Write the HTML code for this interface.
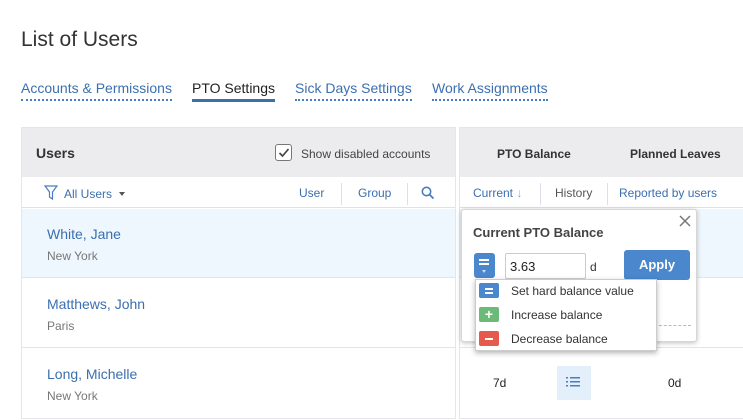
<!DOCTYPE html>
<html><head><meta charset="utf-8"><style>
*{box-sizing:border-box;margin:0;padding:0}
body{width:743px;height:420px;background:#fff;font-family:"Liberation Sans",Arial,sans-serif;position:relative;overflow:hidden;color:#333}
.a{position:absolute;white-space:nowrap}
.tab{font-size:14px;color:#3b6fb0;top:80px;padding-bottom:3px;border-bottom:2px dotted #4a7cc0}
.lnk{color:#3b6fb0}
</style></head><body>
<div class="a" style="left:21px;top:28px;font-size:21px;color:#333">List of Users</div>
<div class="a tab" style="left:21px">Accounts &amp; Permissions</div>
<div class="a tab" style="left:192px;color:#222;border-bottom:3px solid #3b6fb0">PTO Settings</div>
<div class="a tab" style="left:295px">Sick Days Settings</div>
<div class="a tab" style="left:432px">Work Assignments</div>

<!-- left pane -->
<div class="a" style="left:21px;top:127px;width:435px;height:292px;border:1px solid #e3e6ea"></div>
<div class="a" style="left:22px;top:128px;width:433px;height:49px;background:#ececee"></div>
<div class="a" style="left:36px;top:145px;font-size:14px;font-weight:bold;color:#333">Users</div>
<div class="a" style="left:275px;top:144px;width:17px;height:17px;border:1px solid #777;border-radius:3px;background:#fff"></div>
<svg class="a" style="left:278px;top:147px" width="12" height="11"><path d="M1.5 6 L4.5 9 L10.5 2" stroke="#444" stroke-width="1.7" fill="none"/></svg>
<div class="a" style="left:301px;top:147px;font-size:12px;color:#444">Show disabled accounts</div>
<div class="a" style="left:22px;top:177px;width:433px;height:31px;background:#fff;border-bottom:1px solid #dde2e8"></div>
<svg class="a" style="left:44px;top:185px" width="14" height="16"><path d="M1 1 H13 L8.5 7 V14 L5.5 12 V7 Z" stroke="#4a7cc0" stroke-width="1.2" fill="none"/></svg>
<div class="a lnk" style="left:64px;top:187px;font-size:12px">All Users</div>
<div class="a" style="left:119px;top:192px;border:3.5px solid transparent;border-top:4px solid #555"></div>
<div class="a lnk" style="left:299px;top:186px;font-size:12px">User</div>
<div class="a" style="left:341px;top:183px;width:1px;height:22px;background:#dde"></div>
<div class="a lnk" style="left:358px;top:186px;font-size:12px">Group</div>
<div class="a" style="left:407px;top:183px;width:1px;height:22px;background:#dde"></div>
<svg class="a" style="left:421px;top:186px" width="14" height="14"><circle cx="5.5" cy="5.5" r="4.2" stroke="#4a7cc0" stroke-width="1.6" fill="none"/><path d="M8.5 8.5 L12.5 12.5" stroke="#4a7cc0" stroke-width="1.8"/></svg>
<div class="a" style="left:22px;top:209px;width:433px;height:69px;background:#eef6fe;border-bottom:1px solid #dde6f0"></div>
<div class="a" style="left:22px;top:278px;width:433px;height:70px;border-bottom:1px solid #dde6f0"></div>
<div class="a lnk" style="left:47px;top:226px;font-size:14px">White, Jane</div>
<div class="a" style="left:47px;top:249px;font-size:12px;color:#777">New York</div>
<div class="a lnk" style="left:47px;top:296px;font-size:14px">Matthews, John</div>
<div class="a" style="left:47px;top:319px;font-size:12px;color:#777">Paris</div>
<div class="a lnk" style="left:47px;top:366px;font-size:14px">Long, Michelle</div>
<div class="a" style="left:47px;top:389px;font-size:12px;color:#777">New York</div>

<!-- right pane -->
<div class="a" style="left:459px;top:127px;width:284px;height:292px;border:1px solid #e3e6ea;border-right:none"></div>
<div class="a" style="left:460px;top:128px;width:283px;height:49px;background:#ececee"></div>
<div class="a" style="left:497px;top:147px;font-size:12px;font-weight:bold;color:#333">PTO Balance</div>
<div class="a" style="left:630px;top:147px;font-size:12px;font-weight:bold;color:#333">Planned Leaves</div>
<div class="a" style="left:460px;top:177px;width:283px;height:31px;border-bottom:1px solid #dde2e8"></div>
<div class="a lnk" style="left:473px;top:186px;font-size:12px">Current <span style="color:#9ab">↓</span></div>
<div class="a" style="left:540px;top:183px;width:1px;height:22px;background:#dde"></div>
<div class="a" style="left:555px;top:186px;font-size:12px;color:#555">History</div>
<div class="a" style="left:607px;top:183px;width:1px;height:22px;background:#dde"></div>
<div class="a lnk" style="left:619px;top:186px;font-size:12px">Reported by users</div>
<div class="a" style="left:460px;top:209px;width:283px;height:69px;background:#eef6fe;border-bottom:1px solid #dde6f0"></div>
<div class="a" style="left:460px;top:278px;width:283px;height:70px;border-bottom:1px solid #dde6f0"></div>
<div class="a" style="left:493px;top:376px;font-size:12px;color:#222">7d</div>
<div class="a" style="left:557px;top:366px;width:34px;height:34px;background:#e3f0fc"></div>
<svg class="a" style="left:566px;top:376px" width="16" height="12"><g fill="#4a7cc0"><rect x="0" y="1" width="2" height="1.5"/><rect x="0" y="5" width="2" height="1.5"/><rect x="0" y="9" width="2" height="1.5"/><rect x="4" y="1" width="10" height="1.5"/><rect x="4" y="5" width="10" height="1.5"/><rect x="4" y="9" width="10" height="1.5"/></g></svg>
<div class="a" style="left:668px;top:376px;font-size:12px;color:#222">0d</div>

<!-- popup -->
<div class="a" style="left:461px;top:209px;width:236px;height:133px;background:#fff;border:1px solid #d6d6d6;border-radius:3px;box-shadow:0 1px 5px rgba(0,0,0,.25)"></div>
<svg class="a" style="left:679px;top:215px" width="12" height="12"><path d="M1 1 L11 11 M11 1 L1 11" stroke="#777" stroke-width="1.5"/></svg>
<div class="a" style="left:473px;top:225px;font-size:13px;font-weight:bold;color:#444">Current PTO Balance</div>
<div class="a" style="left:474px;top:253px;width:21px;height:25px;background:#4a87cc;border-radius:3px"></div>
<div class="a" style="left:479px;top:259px;width:10px;height:2px;background:#fff"></div>
<div class="a" style="left:479px;top:263px;width:10px;height:2px;background:#fff"></div>
<div class="a" style="left:482px;top:270px;border:2.5px solid transparent;border-top:3px solid #cde"></div>
<div class="a" style="left:505px;top:253px;width:81px;height:26px;border:1px solid #ccc;border-radius:2px;font-size:13px;padding:5px 4px;color:#222">3.63</div>
<div class="a" style="left:590px;top:260px;font-size:12px;color:#333">d</div>
<div class="a" style="left:624px;top:250px;width:66px;height:30px;background:#4a87cc;border-radius:3px;color:#fff;font-weight:bold;font-size:13px;text-align:center;line-height:30px">Apply</div>
<div class="a" style="left:620px;top:325px;width:71px;border-top:1px dashed #bbb"></div>
<!-- dropdown -->
<div class="a" style="left:475px;top:279px;width:182px;height:72px;background:#fff;border:1px solid #ccc;box-shadow:0 2px 5px rgba(0,0,0,.3)"></div>
<div class="a" style="left:479px;top:283px;width:20px;height:15px;background:#4a87cc;border-radius:2px"></div>
<div class="a" style="left:485px;top:288px;width:8px;height:1.5px;background:#fff"></div>
<div class="a" style="left:485px;top:292px;width:8px;height:1.5px;background:#fff"></div>
<div class="a" style="left:511px;top:284px;font-size:12px;color:#333">Set hard balance value</div>
<div class="a" style="left:479px;top:307px;width:20px;height:15px;background:#6cba77;border-radius:2px;color:#fff;font-weight:bold;font-size:14px;line-height:15px;text-align:center">+</div>
<div class="a" style="left:511px;top:308px;font-size:12px;color:#333">Increase balance</div>
<div class="a" style="left:479px;top:331px;width:20px;height:15px;background:#e55a4d;border-radius:2px"></div>
<div class="a" style="left:485px;top:338px;width:8px;height:2px;background:#fff"></div>
<div class="a" style="left:511px;top:332px;font-size:12px;color:#333">Decrease balance</div>
</body></html>
